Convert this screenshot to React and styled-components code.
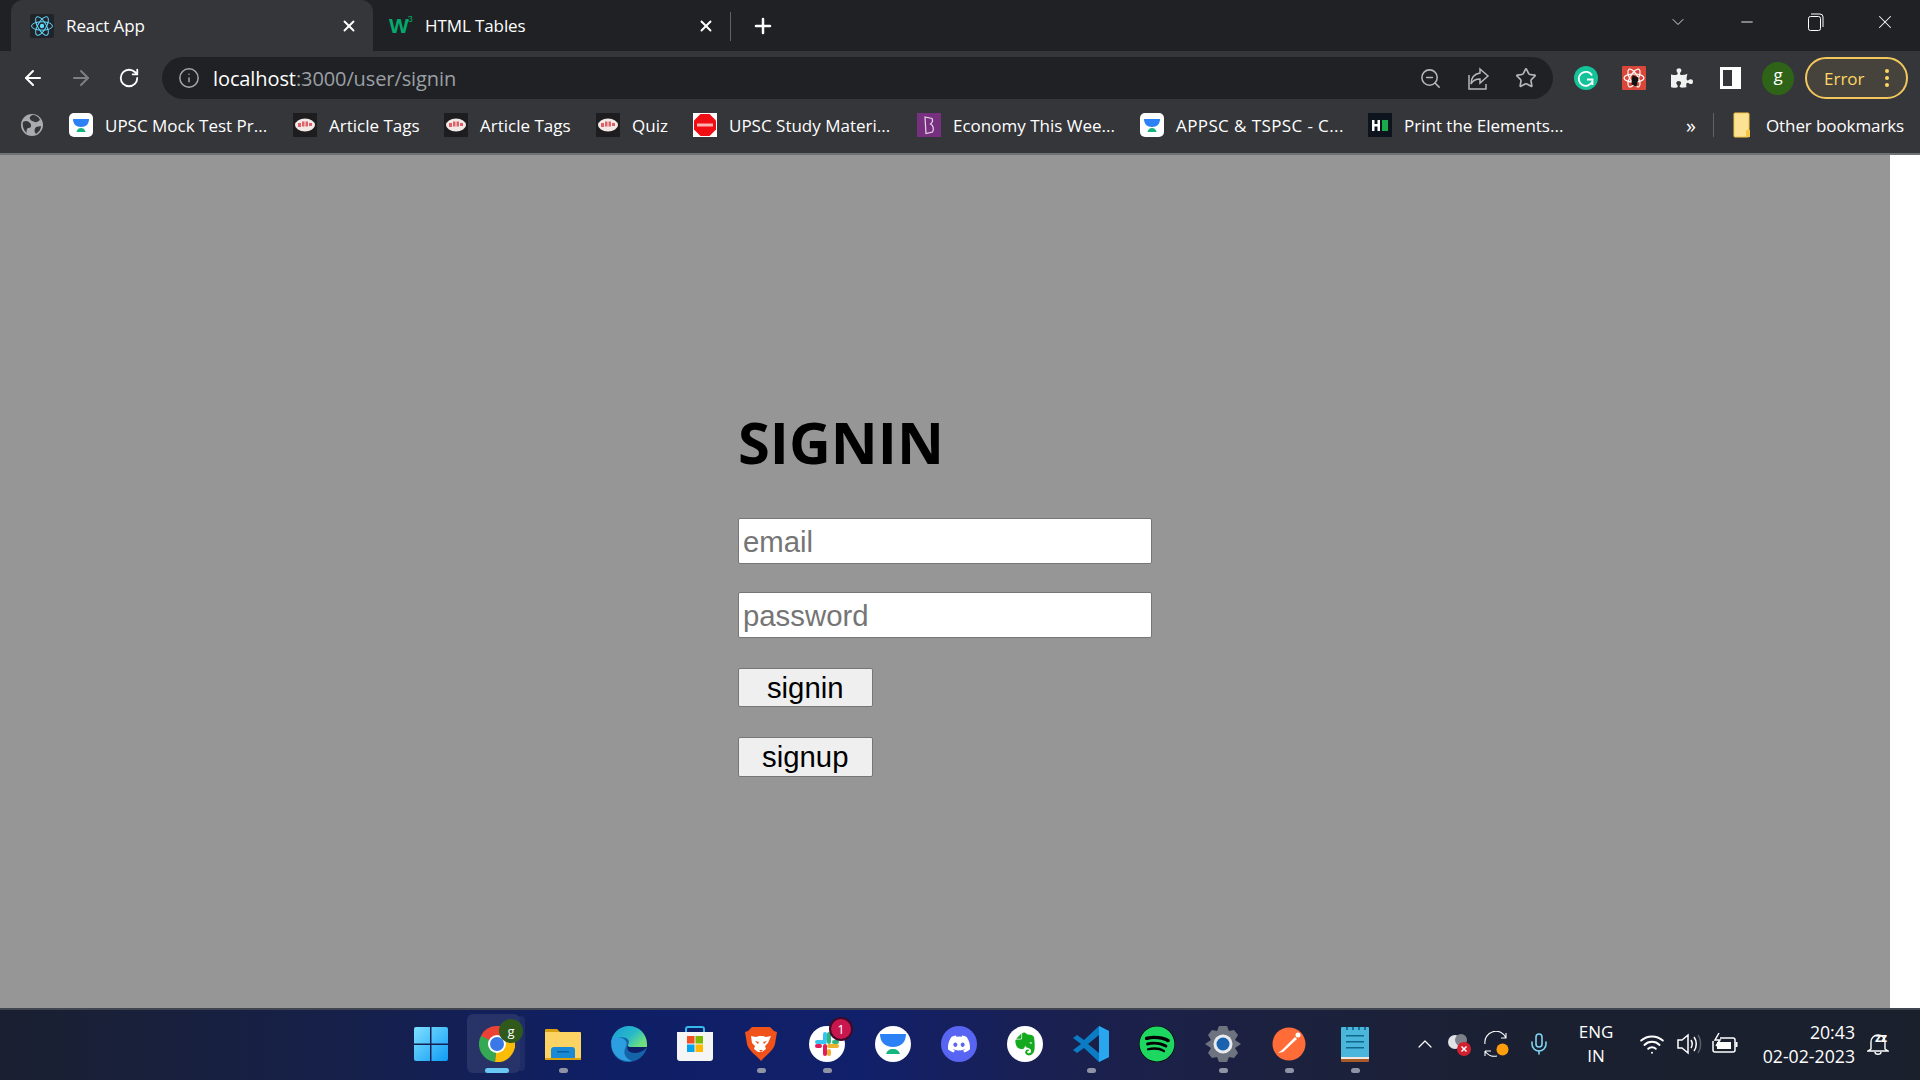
import React from 'react';
import styled, { createGlobalStyle } from 'styled-components';
import { ArrowLeft, ArrowRight, RotateCw, Info, ZoomOut, Star, X, Plus, Minus, ChevronDown, ChevronUp, Wifi, Mic } from 'lucide-react';
import { FaPuzzlePiece, FaDiscord, FaSpotify, FaEvernote } from 'react-icons/fa';

const UI_FONT = '"Open Sans", "Noto Sans", sans-serif';

const GlobalStyle = createGlobalStyle`
    html, body {
        margin: 0;
        height: 100%;
        overflow: hidden;
    }
    #root {
        height: 100%;
    }
    * {
        box-sizing: border-box;
    }
`;

const Screen = styled.div`
    width: 1920px;
    height: 1080px;
    display: flex;
    flex-direction: column;
    font-family: ${UI_FONT};
    background: #fff;
`;

/* ---- tab strip ---- */
const TabStrip = styled.div`
    height: 51px;
    background: #202124;
    display: flex;
    align-items: stretch;
    padding-left: 11px;
    color: #fff;
`;

const Tab = styled.div`
    width: ${p => p.$width}px;
    display: flex;
    align-items: center;
    gap: 12px;
    padding: 0 15px 0 ${p => p.$pad}px;
    background: ${p => (p.$active ? '#35363a' : 'transparent')};
    border-radius: 12px 12px 0 0;
    svg.close {
        flex: none;
    }
`;

const TabTitle = styled.span`
    flex: 1;
    font-size: 17px;
    letter-spacing: -0.1px;
    white-space: nowrap;
`;

const W3Logo = styled.span`
    width: 24px;
    display: flex;
    font-family: "Liberation Sans", sans-serif;
    font-weight: 700;
    font-size: 21px;
    line-height: 22px;
    color: #04aa6d;
    sup {
        font-size: 9px;
        line-height: 9px;
        font-weight: 400;
        margin-left: -1px;
    }
`;

const TabSeparator = styled.div`
    width: 1px;
    height: 29px;
    margin-top: 12px;
    background: #5f6368;
`;

const NewTab = styled.div`
    width: 64px;
    display: flex;
    align-items: center;
    justify-content: center;
`;

const WindowButtons = styled.div`
    margin-left: auto;
    display: flex;
    align-items: flex-start;
`;

const WindowButton = styled.div`
    width: ${p => p.$width}px;
    height: 44px;
    display: flex;
    align-items: center;
    justify-content: center;
`;

/* ---- toolbar ---- */
const Toolbar = styled.div`
    height: 48px;
    padding: 6px 12px 0 9px;
    background: #35363a;
    display: flex;
    align-items: flex-start;
`;

const IconCell = styled.div`
    width: 48px;
    height: 42px;
    display: flex;
    align-items: center;
    justify-content: center;
    color: ${p => p.$color || '#fff'};
`;

const AddressBar = styled.div`
    flex: 1;
    height: 42px;
    margin: 0 9px;
    padding: 0 3px 0 16px;
    background: #202124;
    border-radius: 21px;
    display: flex;
    align-items: center;
    gap: 13px;
    font-size: 20px;
    letter-spacing: -0.1px;
    white-space: nowrap;
    color: #9aa0a6;
    b {
        font-weight: 400;
        color: #fff;
    }
`;

const AddressText = styled.span`
    flex: 1;
`;

const AddressActions = styled.div`
    display: flex;
`;

const Avatar = styled.div`
    width: 32px;
    height: 33px;
    border-radius: 50%;
    background: #2e6318;
    color: #fff;
    font-size: 17px;
    line-height: 26px;
    text-align: center;
`;

const ErrorPill = styled.div`
    width: 103px;
    height: 42px;
    margin-left: 3px;
    padding: 0 17px;
    border: 2px solid #f2c75c;
    border-radius: 21px;
    background: #46433d;
    color: #fdd663;
    font-size: 17px;
    display: flex;
    align-items: center;
    justify-content: space-between;
`;

const PillDots = styled.span`
    display: flex;
    flex-direction: column;
    gap: 3px;
    i {
        width: 4px;
        height: 4px;
        border-radius: 50%;
        background: #fdd663;
    }
`;

/* ---- bookmarks ---- */
const BookmarksBar = styled.div`
    height: 54px;
    padding: 0 16px 2px 0;
    background: #35363a;
    display: flex;
    align-items: center;
    gap: 26px;
    color: #fff;
    font-size: 17px;
    white-space: nowrap;
`;

const GlobeCell = styled.div`
    width: 43px;
    display: flex;
    justify-content: flex-end;
`;

const Bookmark = styled.div`
    flex: none;
    display: flex;
    align-items: center;
    gap: ${p => p.$gap || 12}px;
    width: ${p => p.$width}px;
    letter-spacing: ${p => p.$spacing || 0}px;
    svg {
        flex: none;
    }
`;

const BookmarksEnd = styled.div`
    margin-left: auto;
    display: flex;
    align-items: center;
`;

const More = styled.span`
    width: 44px;
    font-size: 20px;
    text-align: center;
`;

const BarDivider = styled.span`
    width: 1px;
    height: 24px;
    background: #5f6368;
    margin-right: 19px;
`;

/* ---- page ---- */
const PageArea = styled.div`
    flex: 1;
    display: flex;
    border-top: 2px solid #707173;
    background: #fff;
`;

const Backdrop = styled.main`
    flex: 1;
    background: #969696;
    display: flex;
    align-items: center;
    justify-content: center;
`;

const ScrollGutter = styled.div`
    width: 30px;
`;

const SigninForm = styled.form`
    width: 414px;
    padding-bottom: 1px;
    display: flex;
    flex-direction: column;
    align-items: flex-start;
`;

const Heading = styled.h1`
    margin: 0 0 20px;
    font-family: "Open Sans", sans-serif;
    font-size: 57.8px;
    line-height: 113px;
    font-weight: 700;
    color: #000;
`;

const Input = styled.input`
    width: 414px;
    height: 46px;
    margin-bottom: ${p => p.$gap}px;
    padding: 2px 4px 0;
    background: #fff;
    border: 1px solid #767676;
    border-radius: 2px;
    font-family: "Liberation Sans", Arial, sans-serif;
    font-size: 29.33px;
    &::placeholder {
        color: #757575;
        opacity: 1;
    }
`;

const Button = styled.button`
    width: 134.5px;
    height: ${p => p.$height}px;
    margin-bottom: ${p => p.$gap}px;
    padding: 0;
    background: #efefef;
    border: 1px solid #767676;
    border-radius: 2px;
    font-family: "Liberation Sans", Arial, sans-serif;
    font-size: 29.33px;
    color: #000;
`;

/* ---- taskbar ---- */
const Taskbar = styled.footer`
    height: 72px;
    flex: none;
    display: flex;
    padding-left: 398px;
    border-top: 2px solid #41454f;
    color: #fff;
    background: linear-gradient(90deg, #1a2030 0%, #16204a 18%, #0f1f66 32%, #11206a 45%, #1a2050 55%, #1c2140 66%, #1a2030 80%, #1a202c 100%);
`;

const TaskItem = styled.div`
    position: relative;
    width: 66px;
    height: 70px;
    padding-top: 16px;
    display: flex;
    flex-direction: column;
    align-items: center;
`;

const ActiveTile = styled.div`
    position: absolute;
    top: 4px;
    left: 3px;
    width: 53px;
    height: 59px;
    border-radius: 6px;
    background: rgba(255, 255, 255, 0.09);
    box-shadow: 7px 0 0 -2px rgba(255, 255, 255, 0.06);
`;

const TaskIconBox = styled.div`
    position: relative;
    width: 36px;
    height: 36px;
    display: flex;
    align-items: center;
    justify-content: center;
`;

const RoundIcon = styled.div`
    width: 36px;
    height: 36px;
    border-radius: 50%;
    background: ${p => p.$bg};
    color: ${p => p.$color};
    display: flex;
    align-items: center;
    justify-content: center;
`;

const RunPill = styled.span`
    width: ${p => (p.$active ? 24 : 9)}px;
    height: 5px;
    margin-top: 6px;
    border-radius: 3px;
    background: ${p => (p.$active ? '#5cc3f5' : '#8f93a6')};
`;

const Badge = styled.span`
    position: absolute;
    top: -7px;
    right: ${p => p.$right}px;
    width: ${p => p.$size}px;
    height: ${p => p.$size}px;
    border-radius: 50%;
    background: ${p => p.$bg};
    box-shadow: 0 0 0 2px ${p => p.$ring};
    color: #fff;
    font-size: 13px;
    line-height: ${p => p.$size}px;
    text-align: center;
`;

const Tray = styled.div`
    margin-left: auto;
    display: flex;
    padding-right: 19px;
    height: 70px;
    font-size: 17px;
`;

const TrayCell = styled.div`
    width: ${p => p.$width}px;
    height: 100%;
    display: flex;
    align-items: center;
    justify-content: center;
    padding-bottom: 2px;
    position: relative;
`;

const TrayText = styled.div`
    width: ${p => p.$width}px;
    height: 100%;
    padding-top: 10px;
    line-height: 24px;
    font-size: ${p => p.$size}px;
    text-align: ${p => p.$align};
    white-space: pre-line;
`;

const BellZ = styled.span`
    position: absolute;
    top: 21px;
    left: 20px;
    font-size: 13px;
    font-weight: 700;
    line-height: 13px;
    letter-spacing: -0.5px;
`;

/* ---- drawings ---- */
const ReactFavicon = () => (
    <svg width="24" height="24" viewBox="0 0 24 24" fill="none" stroke="#61dafb" strokeWidth="1">
        <rect width="24" height="24" rx="2" fill="#20232a" stroke="none" />
        <circle cx="12" cy="12" r="2.2" fill="#61dafb" stroke="none" />
        <ellipse cx="12" cy="12" rx="10.5" ry="4.2" />
        <ellipse cx="12" cy="12" rx="10.5" ry="4.2" transform="rotate(60 12 12)" />
        <ellipse cx="12" cy="12" rx="10.5" ry="4.2" transform="rotate(120 12 12)" />
    </svg>
);

const BowlIcon = () => (
    <svg width="24" height="24" viewBox="0 0 24 24">
        <rect width="24" height="24" rx="5" fill="#fff" />
        <path d="M4 6h16c0 5-3 8-8 8S4 11 4 6z" fill="#2d81f7" />
        <path d="M7.5 19c.5-2.5 2.2-4 4.5-4s4 1.500 4.500 4z" fill="#16b57f" />
    </svg>
);

const ArticleIcon = () => (
    <svg width="24" height="24" viewBox="0 0 24 24">
        <rect width="24" height="24" fill="#1d1d1f" />
        <ellipse cx="12" cy="12" rx="10" ry="6.500" fill="#f2e9e6" />
        <path d="M5 10h3v4H5zM9 8.500h2.500v5H9zM12.500 8.500H15v5h-2.500zM16 10h3v3h-3z" fill="#e0606a" />
    </svg>
);

const StopIcon = () => (
    <svg width="24" height="24" viewBox="0 0 24 24">
        <rect width="24" height="24" fill="#fff" />
        <path d="M7.500 1h9L23 7.500v9L16.500 23h-9L1 16.500v-9z" fill="#f10d14" />
        <path d="M4 10.500h16v3H4z" fill="#ffb3b3" />
    </svg>
);

const ByjusIcon = () => (
    <svg width="24" height="24" viewBox="0 0 24 24" fill="none">
        <rect width="24" height="24" fill="#77307f" />
        <path d="M8 4l7 1.500c1 2 .5 4-1.500 5.500 3 1.500 3.500 5 2 8L9 20.500z" stroke="#e7d7ea" strokeWidth="1.200" />
    </svg>
);

const HackerIcon = () => (
    <svg width="24" height="24" viewBox="0 0 24 24">
        <rect width="24" height="24" fill="#0e141e" />
        <path d="M4 7h2.500v4h3V7H12v11H9.500v-4.500h-3V18H4z" fill="#fff" />
        <rect x="14" y="7" width="6" height="11" fill="#1ba94c" />
    </svg>
);

const GlobeIcon = () => (
    <svg width="22" height="24" viewBox="0 0 22 24">
        <circle cx="11" cy="12" r="11" fill="#a8abb0" />
        <path d="M2 9c3-2 5-1 7 1s1 5-1 5-3 2-2 5C3 18 1 13 2 9zM11 2c4 0 7 2 8 5-2 1-3 3-5 2s-4-1-5-3 1-3 2-4zM15 14l5-1c0 3-2 6-5 8-2-2-2-5 0-7z" fill="#35363a" />
    </svg>
);

const ShareIcon = () => (
    <svg width="24" height="26" viewBox="0 0 24 26" fill="none" stroke="#b4b7bb" strokeWidth="1.500">
        <path d="M3 10v14h17v-5" />
        <path d="M14 4l8 7-8 7v-4c-4 0-7 1-9 5 0-6 3-10 9-11z" />
    </svg>
);

const GrammarlyIcon = () => (
    <svg width="24" height="24" viewBox="0 0 24 24" fill="none">
        <circle cx="12" cy="12" r="12" fill="#15c39a" />
        <path d="M18 9.500A7 7 0 1 0 18.500 15M13 13.500h5.500V19" stroke="#fff" strokeWidth="1.800" />
    </svg>
);

const BugIcon = () => (
    <svg width="24" height="24" viewBox="0 0 24 24" fill="none" stroke="#fff" strokeWidth="1.200">
        <rect width="24" height="24" rx="1" fill="#d9473a" stroke="none" />
        <ellipse cx="12" cy="12" rx="10" ry="4" />
        <ellipse cx="12" cy="12" rx="10" ry="4" transform="rotate(60 12 12)" />
        <ellipse cx="12" cy="12" rx="10" ry="4" transform="rotate(120 12 12)" />
        <path d="M11 10l5 2-2 8-4-2z" fill="#111" stroke="#111" />
    </svg>
);

const SidePanelIcon = () => (
    <svg width="21" height="22" viewBox="0 0 21 22">
        <rect width="21" height="22" fill="#fff" />
        <rect x="3" y="3" width="9" height="16" fill="#35363a" />
    </svg>
);

const FolderBookmark = () => (
    <svg width="18" height="26" viewBox="0 0 18 26">
        <rect x="1" y="1" width="15" height="24" rx="1" fill="#fde293" stroke="#f6c544" strokeWidth="1" />
        <rect x="13" y="18" width="4" height="7" fill="#f6c544" />
    </svg>
);

const WindowsLogo = () => (
    <svg width="36" height="36" viewBox="0 0 36 36">
        <defs>
            <linearGradient id="win" x1="0" y1="0" x2="1" y2="1">
                <stop offset="0" stopColor="#7fe0ff" />
                <stop offset="1" stopColor="#0f9bf5" />
            </linearGradient>
        </defs>
        <path d="M1 3a2 2 0 0 1 2-2h14v16.500H1zM18.500 1H33a2 2 0 0 1 2 2v14.500H18.500zM1 19h16v16H3a2 2 0 0 1-2-2zM18.500 19H35v14a2 2 0 0 1-2 2H18.500z" fill="url(#win)" />
    </svg>
);

const ChromeLogo = () => (
    <svg width="36" height="36" viewBox="0 0 36 36">
        <path d="M18 18L33.600 9A18 18 0 0 0 2 9.700L2.500 27z" fill="#ea4335" />
        <path d="M18 18L2 9.700A18 18 0 0 0 16 36z" fill="#34a853" />
        <path d="M18 18L33.600 9A18 18 0 0 1 16 36z" fill="#fbbc05" />
        <circle cx="18" cy="18" r="9" fill="#fff" />
        <circle cx="18" cy="18" r="7" fill="#3b78e7" />
    </svg>
);

const FilesLogo = () => (
    <svg width="36" height="36" viewBox="0 0 36 36">
        <path d="M0 4a1 1 0 0 1 1-1h11l4 4v3H0z" fill="#d9a20c" />
        <path d="M0 6h35a1 1 0 0 1 1 1v26H0z" fill="#fdd463" />
        <path d="M6 33V24a3 3 0 0 1 3-3h18a3 3 0 0 1 3 3v9z" fill="#1a8ad6" />
        <rect x="12" y="25" width="12" height="1.500" fill="#0c5fa6" />
        <rect y="32" width="36" height="2" fill="#d9a20c" />
    </svg>
);

const EdgeLogo = () => (
    <svg width="36" height="36" viewBox="0 0 36 36">
        <defs>
            <linearGradient id="edgeTop" x1="0" y1="0" x2="1" y2="0.600">
                <stop offset="0" stopColor="#1a9bd8" />
                <stop offset="0.6" stopColor="#27b9c9" />
                <stop offset="1" stopColor="#6fe07f" />
            </linearGradient>
        </defs>
        <path d="M0 18C0 8 8 0 18 0c10 0 18 8 18 18v3H18c-6-8-14-8-18-3z" fill="url(#edgeTop)" />
        <path d="M36 21c-2 9-10 15-19 15C7 36 0 28 0 18c3-6 10-8 15-6 4 2 3 5 2 7-2 4 1 8 6 8 5 0 10-2 13-6z" fill="#1563a8" />
        <path d="M1 14c-3 10 5 23 20 21-6-2-9-7-7-12 1-3 3-6 0-9-3-3-11-4-13 0z" fill="#2d9fe0" />
    </svg>
);

const StoreLogo = () => (
    <svg width="36" height="36" viewBox="0 0 36 36">
        <path d="M9 7V3a2 2 0 0 1 2-2h14a2 2 0 0 1 2 2v4" fill="none" stroke="#35b8ea" strokeWidth="2" />
        <path d="M0 6h36v26a3 3 0 0 1-3 3H3a3 3 0 0 1-3-3z" fill="#f5f5f5" />
        <rect x="10" y="10" width="7.500" height="7.500" fill="#f25022" />
        <rect x="18.500" y="10" width="7.500" height="7.500" fill="#7fba00" />
        <rect x="10" y="18.500" width="7.500" height="7.500" fill="#00a4ef" />
        <rect x="18.500" y="18.500" width="7.500" height="7.500" fill="#ffb900" />
    </svg>
);

const BraveLogo = () => (
    <svg width="32" height="36" viewBox="0 0 32 36">
        <path d="M7 1h18l4 4 3 1-2 12c-1 6-10 12-14 17C12 30 3 24 2 18L0 6l3-1z" fill="#f1511b" />
        <path d="M6 10l5 1 3-1h4l3 1 5-1-3 7-3 3 1 3-4 3h-4l-4-3 1-3-3-3z" fill="#fff" />
        <path d="M10 15l4 1-1 2zM22 15l-4 1 1 2zM14 24h4l-2 2z" fill="#f1511b" />
    </svg>
);

const SlackLogo = () => (
    <svg width="36" height="36" viewBox="0 0 36 36" fill="none" strokeWidth="4" strokeLinecap="round">
        <circle cx="18" cy="18" r="18" fill="#fff" />
        <path d="M16 8v6M8 16h8" stroke="#36c5f0" />
        <path d="M20 8v8M28 16h-3" stroke="#2eb67d" />
        <path d="M28 20h-8M20 25v3" stroke="#ecb22e" />
        <path d="M16 20v8M8 20h3" stroke="#e01e5a" />
    </svg>
);

const BiteIcon = () => (
    <svg width="36" height="36" viewBox="0 0 36 36">
        <circle cx="18" cy="18" r="18" fill="#fff" />
        <path d="M5 8h26c0 8-5 13-13 13S5 16 5 8z" fill="#2d81f7" />
        <path d="M11 28c1-3 3-5 7-5s6 2 7 5z" fill="#16b57f" />
    </svg>
);

const VscodeLogo = () => (
    <svg width="36" height="36" viewBox="0 0 36 36">
        <path d="M26 0l10 5v26l-10 5-15-14-7 5-4-3 8-6-8-6 4-3 7 5z" fill="#0b7bc4" />
        <path d="M26 0l10 5v26l-10 5z" fill="#2aa6ee" />
        <path d="M26 9L15 18l11 9z" fill="#1b1f45" />
    </svg>
);

const SettingsLogo = () => (
    <svg width="36" height="36" viewBox="0 0 36 36">
        <path d="M14 0h8l2 5 5-1 4 5-3 5 6 4-6 4 3 5-4 5-5-1-2 5h-8l-2-5-5 1-4-5 3-5-6-4 6-4-3-5 4-5 5 1z" fill="#6d7480" />
        <circle cx="18" cy="18" r="9.500" fill="#e8eaee" />
        <circle cx="18" cy="18" r="6.500" fill="#1a62b0" />
    </svg>
);

const PostmanLogo = () => (
    <svg width="34" height="34" viewBox="0 0 34 34" fill="none">
        <circle cx="17" cy="17" r="16.500" fill="#ff6c37" />
        <circle cx="26" cy="8" r="2.500" fill="#fff" />
        <path d="M23 10L10 23l-4 3 5-1 14-13z" fill="#fff" />
    </svg>
);

const NotepadLogo = () => (
    <svg width="28" height="36" viewBox="0 0 28 36">
        <rect y="1" width="28" height="31" rx="1" fill="#4bb6dc" />
        <rect y="31" width="28" height="5" rx="1" fill="#a85a28" />
        <rect y="31" width="28" height="2" fill="#efe9e2" />
        <path d="M5 1h2v3H5zM11 1h2v3h-2zM17 1h2v3h-2zM23 1h2v3h-2z" fill="#1d6f93" />
        <path d="M5 9h18v1.500H5zM5 15h18v1.500H5zM5 21h18v1.500H5z" fill="#11678a" />
    </svg>
);

const CloudError = () => (
    <svg width="26" height="26" viewBox="0 0 26 26">
        <circle cx="9" cy="11" r="7" fill="#e0e2e6" />
        <circle cx="15" cy="9" r="6" fill="#7d8088" />
        <circle cx="18" cy="18" r="7" fill="#d3202f" />
        <path d="M15.500 15.500l5 5m0-5l-5 5" stroke="#fff" strokeWidth="1.500" />
    </svg>
);

const SyncIcon = () => (
    <svg width="26" height="26" viewBox="0 0 26 26" fill="none" stroke="#fff" strokeWidth="1.100">
        <path d="M1 13A11 11 0 0 1 22 7M22 2v5h-5" />
        <path d="M1 20h6M1 20v5M1 20a11 11 0 0 0 12 5" />
        <circle cx="18.500" cy="18.500" r="6" fill="#ff9d0a" stroke="none" />
    </svg>
);

const VolumeIcon = () => (
    <svg width="26" height="24" viewBox="0 0 26 24" fill="none" stroke="#fff" strokeWidth="1.500">
        <path d="M2 8h4l6-5v18l-6-5H2z" />
        <path d="M15 8c1.500 2.500 1.500 5.500 0 8M18 5c3 4 3 10 0 14" />
        <path d="M22 3c3.500 5 3.500 13 0 18" stroke="#5a5e66" />
    </svg>
);

const BatteryIcon = () => (
    <svg width="26" height="24" viewBox="0 0 26 24" fill="none" stroke="#fff" strokeWidth="1.500">
        <path d="M8 6h13a2 2 0 0 1 2 2v10a2 2 0 0 1-2 2H3a2 2 0 0 1-2-2V9" />
        <path d="M7 1L3 8h5l-4 6" />
        <rect x="5" y="10" width="14" height="7" fill="#fff" stroke="none" />
        <rect x="23.500" y="10" width="2" height="5" fill="#fff" stroke="none" />
    </svg>
);

const BellIcon = () => (
    <svg width="22" height="24" viewBox="0 0 22 24" fill="none" stroke="#fff" strokeWidth="1.400">
        <path d="M4 17V10c0-4 3-7 7-7s7 3 7 7v7l3 2H1z" />
        <path d="M8 20c0 3 6 3 6 0" />
    </svg>
);

const bookmarks = [
    { icon: <BowlIcon />, label: 'UPSC Mock Test Pr...', width: 198 },
    { icon: <ArticleIcon />, label: 'Article Tags', width: 125 },
    { icon: <ArticleIcon />, label: 'Article Tags', width: 126 },
    { icon: <ArticleIcon />, label: 'Quiz', width: 71 },
    { icon: <StopIcon />, label: 'UPSC Study Materi...', width: 198 },
    { icon: <ByjusIcon />, label: 'Economy This Wee...', width: 197 },
    { icon: <BowlIcon />, label: 'APPSC & TSPSC - C...', width: 202, spacing: 0.4 },
    { icon: <HackerIcon />, label: 'Print the Elements...', width: 193 },
];

const taskIcons = [
    { key: 'start', icon: <WindowsLogo /> },
    { key: 'chrome', icon: <ChromeLogo />, pill: true, active: true },
    { key: 'files', icon: <FilesLogo />, pill: true },
    { key: 'edge', icon: <EdgeLogo /> },
    { key: 'store', icon: <StoreLogo /> },
    { key: 'brave', icon: <BraveLogo />, pill: true },
    { key: 'slack', icon: <SlackLogo />, pill: true },
    { key: 'bite', icon: <BiteIcon /> },
    { key: 'discord', icon: <RoundIcon $bg="#5865f2" $color="#fff"><FaDiscord size={24} /></RoundIcon> },
    { key: 'evernote', icon: <RoundIcon $bg="#fff" $color="#14a91e"><FaEvernote size={26} /></RoundIcon> },
    { key: 'vscode', icon: <VscodeLogo />, pill: true },
    { key: 'spotify', icon: <RoundIcon $bg="#000" $color="#1ed760"><FaSpotify size={36} /></RoundIcon> },
    { key: 'settings', icon: <SettingsLogo />, pill: true },
    { key: 'postman', icon: <PostmanLogo />, pill: true },
    { key: 'notepad', icon: <NotepadLogo />, pill: true },
];

function App() {
    return (
        <Screen>
            <GlobalStyle />
            <TabStrip>
                <Tab $active $width={362} $pad={19}>
                    <ReactFavicon />
                    <TabTitle>React App</TabTitle>
                    <X className="close" size={18} strokeWidth={2.5} />
                </Tab>
                <Tab $width={357} $pad={16}>
                    <W3Logo>W<sup>3</sup></W3Logo>
                    <TabTitle>HTML Tables</TabTitle>
                    <X className="close" size={18} strokeWidth={2.5} />
                </Tab>
                <TabSeparator />
                <NewTab><Plus size={24} strokeWidth={2.5} /></NewTab>
                <WindowButtons>
                    <WindowButton $width={70}><ChevronDown size={20} strokeWidth={1} /></WindowButton>
                    <WindowButton $width={68}><Minus size={18} strokeWidth={1.2} /></WindowButton>
                    <WindowButton $width={69}>
                        <svg width="16" height="18" viewBox="0 0 16 18" fill="none" stroke="#fff" strokeWidth="1">
                            <rect x="0.500" y="3.500" width="12" height="14" rx="2" />
                            <path d="M3 1h9a3 3 0 0 1 3 3v10" />
                        </svg>
                    </WindowButton>
                    <WindowButton $width={70}><X size={22} strokeWidth={1.1} /></WindowButton>
                </WindowButtons>
            </TabStrip>

            <Toolbar>
                <IconCell><ArrowLeft size={24} strokeWidth={2} /></IconCell>
                <IconCell $color="#7d7f83"><ArrowRight size={24} strokeWidth={2} /></IconCell>
                <IconCell><RotateCw size={22} strokeWidth={2} /></IconCell>
                <AddressBar>
                    <Info size={22} strokeWidth={1.6} color="#a5a8ad" />
                    <AddressText><b>localhost</b>:3000/user/signin</AddressText>
                    <AddressActions>
                        <IconCell $color="#b4b7bb"><ZoomOut size={23} strokeWidth={1.6} /></IconCell>
                        <IconCell><ShareIcon /></IconCell>
                        <IconCell $color="#b4b7bb"><Star size={22} strokeWidth={1.8} /></IconCell>
                    </AddressActions>
                </AddressBar>
                <IconCell><GrammarlyIcon /></IconCell>
                <IconCell><BugIcon /></IconCell>
                <IconCell><FaPuzzlePiece size={22} color="#f1f1f1" /></IconCell>
                <IconCell><SidePanelIcon /></IconCell>
                <IconCell><Avatar>g</Avatar></IconCell>
                <ErrorPill>
                    Error
                    <PillDots><i /><i /><i /></PillDots>
                </ErrorPill>
            </Toolbar>

            <BookmarksBar>
                <GlobeCell><GlobeIcon /></GlobeCell>
                {bookmarks.map((b, i) => (
                    <Bookmark key={i} $width={b.width} $spacing={b.spacing}>
                        {b.icon}
                        {b.label}
                    </Bookmark>
                ))}
                <BookmarksEnd>
                    <More>»</More>
                    <BarDivider />
                    <Bookmark $width={171} $gap={15} $spacing={-0.1}>
                        <FolderBookmark />
                        Other bookmarks
                    </Bookmark>
                </BookmarksEnd>
            </BookmarksBar>

            <PageArea>
                <Backdrop>
                    <SigninForm onSubmit={e => e.preventDefault()}>
                        <Heading>SIGNIN</Heading>
                        <Input type="email" placeholder="email" $gap={28} />
                        <Input type="password" placeholder="password" $gap={30} />
                        <Button $height={39} $gap={30}>signin</Button>
                        <Button $height={40} $gap={0}>signup</Button>
                    </SigninForm>
                </Backdrop>
                <ScrollGutter />
            </PageArea>

            <Taskbar>
                {taskIcons.map(t => (
                    <TaskItem key={t.key}>
                        {t.active && <ActiveTile />}
                        <TaskIconBox>
                            {t.icon}
                            {t.key === 'chrome' && <Badge $right={-8} $size={24} $bg="#2f5a1c" $ring="transparent">g</Badge>}
                            {t.key === 'slack' && <Badge $right={-6} $size={20} $bg="#c8174f" $ring="#3d0a2a">1</Badge>}
                        </TaskIconBox>
                        {t.pill && <RunPill $active={t.active} />}
                    </TaskItem>
                ))}
                <Tray>
                    <TrayCell $width={34}><ChevronUp size={24} strokeWidth={1.2} /></TrayCell>
                    <TrayCell $width={34}><CloudError /></TrayCell>
                    <TrayCell $width={42}><SyncIcon /></TrayCell>
                    <TrayCell $width={42}><Mic size={24} strokeWidth={1.6} color="#7fd3f2" /></TrayCell>
                    <TrayText $width={72} $size={17} $align="center">{'ENG\nIN'}</TrayText>
                    <TrayCell $width={39}><Wifi size={26} strokeWidth={1.8} /></TrayCell>
                    <TrayCell $width={35}><VolumeIcon /></TrayCell>
                    <TrayCell $width={38}><BatteryIcon /></TrayCell>
                    <TrayText $width={111} $size={17.7} $align="right">{'20:43\n02-02-2023'}</TrayText>
                    <TrayCell $width={46}>
                        <BellIcon />
                        <BellZ>zz</BellZ>
                    </TrayCell>
                </Tray>
            </Taskbar>
        </Screen>
    );
}

export default App;
